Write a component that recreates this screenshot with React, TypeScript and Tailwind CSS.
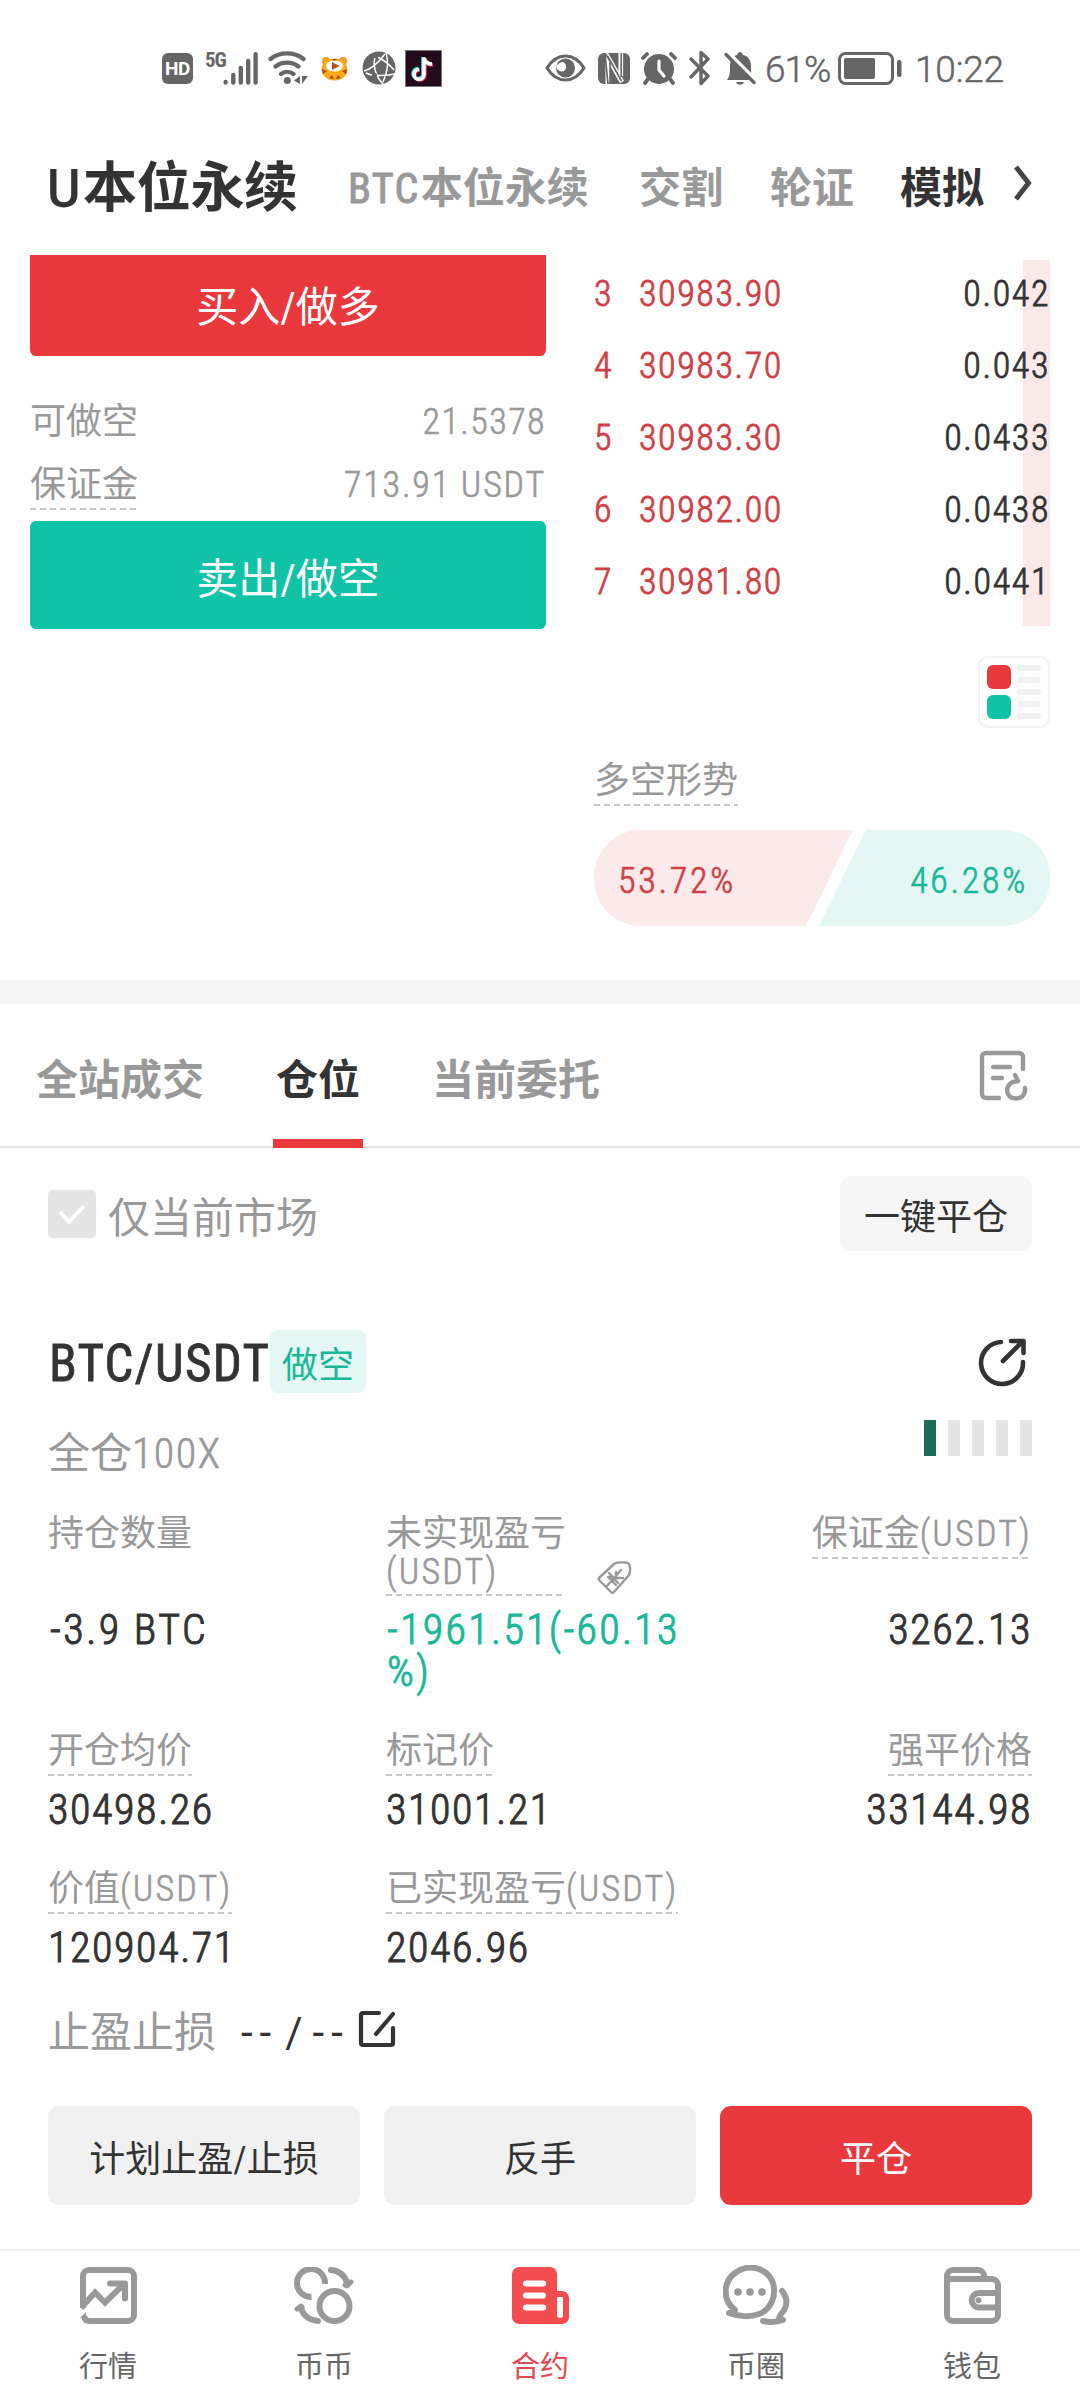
import React from "react";

const DASH =
  "h-[2px] w-full bg-[repeating-linear-gradient(90deg,#c8c8c8_0px,#c8c8c8_6px,transparent_6px,transparent_10px)]";

function DashedLabel({ children, className = "" }: { children: React.ReactNode; className?: string }) {
  return (
    <div className={`flex w-fit flex-col whitespace-nowrap ${className}`}>
      <span className="pt-[2px] leading-[38px]">{children}</span>
      <div className={`mt-[4px] ${DASH}`} />
    </div>
  );
}

function Unit() {
  return <span className="font-light tracking-[2.2px] [-webkit-text-stroke:0.6px_#999]">(USDT)</span>;
}

function StatusBar() {
  return (
    <div className="flex h-[136px] items-center pl-[162px] text-[#666] [font-stretch:100%]">
      <div className="flex h-[31px] w-[31px] items-center justify-center rounded-[6px] bg-[#666] text-[19px] font-bold leading-none tracking-[-0.5px] text-white">
        HD
      </div>
      <div className="ml-[12px] h-[33px] w-[18px] text-[21px] font-bold leading-[16px] tracking-[-1px] [font-stretch:75%]">5G</div>
      <svg className="h-[33px] w-[36px]" viewBox="0 0 36 33" stroke="#666" strokeWidth="4.4" strokeLinecap="round">
        <path d="M2.6 30v.6M10.3 23v7.6M17.8 16v14.6M25.2 9v21.6M32.6 2.3v28.3" />
      </svg>
      <svg className="ml-[9px] h-[34px] w-[41px]" viewBox="0 0 41 34" fill="none" stroke="#666" strokeWidth="4.2" strokeLinecap="round">
        <path d="M2.5 8C12 .6 26 .6 35.500 8M7.500 15.500c6.500-5.200 16.500-5.200 23 0M13 23c3.600-2.800 8.800-2.800 12.500 0" />
        <circle cx="19.300" cy="29.500" r="3.500" fill="#666" stroke="none" />
        <path d="M32 25v8l-6-3.500zM34 25h6l-6 8z" fill="#666" stroke="none" />
      </svg>
      <svg className="ml-[12px] h-[25px] w-[27px]" viewBox="0 0 27 25">
        <circle cx="5" cy="5" r="4" fill="#f29b1d" />
        <circle cx="22" cy="5" r="4" fill="#f29b1d" />
        <ellipse cx="13.500" cy="13.500" rx="13" ry="11" fill="#fbaa19" />
        <path d="M1 13l5 2-4 3zM26 13l-5 2 4 3zM8 22l3-3 2 4zM15 23l2-4 3 3zM11 3h5l-2 3z" fill="#a94a1c" />
        <ellipse cx="13.500" cy="10" rx="8.500" ry="5.500" fill="#fff" />
        <path d="M11 6l7.500 4-7.500 4z" fill="#b54f24" />
      </svg>
      <svg className="ml-[14px] h-[34px] w-[34px]" viewBox="0 0 34 34">
        <circle cx="17" cy="17" r="16.500" fill="#666" />
        <path
          d="M14 4C10 12 13 25 21 33M24 2c3 9 1 20-3 29M4 22c8 4 18 3 29 1M13 5c8 3 14 8 19 14M2 20C10 18 17 11 23 3"
          fill="none"
          stroke="#fff"
          strokeWidth="1.500"
        />
        <circle cx="14" cy="5" r="2.500" fill="#666" />
        <circle cx="12.500" cy="24.500" r="2.500" fill="#666" />
      </svg>
      <svg className="ml-[9px] h-[37px] w-[37px]" viewBox="0 0 37 37">
        <rect x=".5" y=".5" width="36" height="36" fill="#240b1c" stroke="#777" />
        <g fill="none" strokeWidth="3.600">
          <path d="M18 7v16.500a5 5 0 1 1-5-5M18 8c1 4 4 6 8 6" stroke="#25e8e4" />
          <path d="M20 8v17a5 5 0 1 1-5-5M20 9c1 4 4 6 8 6" stroke="#f5295b" />
          <path d="M19 7.500v17a5 5 0 1 1-5-5M19 8c1 4 4 6 8 6" stroke="#fff" />
        </g>
      </svg>
      <svg className="ml-[103px] h-[28px] w-[41px]" viewBox="0 0 41 28">
        <path d="M2 14C12-2 29-2 39 14C29 30 12 30 2 14z" fill="none" stroke="#666" strokeWidth="3.200" strokeLinejoin="round" />
        <circle cx="20.500" cy="14" r="9.500" fill="#666" />
        <path d="M11 13a6 6 0 0 0 8 4c3-2 3-7-1-9a9.500 9.500 0 0 0-7 5z" fill="#fff" />
      </svg>
      <svg className="ml-[12px] h-[31px] w-[32px]" viewBox="0 0 32 31">
        <rect width="32" height="31" rx="6" fill="#666" />
        <path d="M9.800 31V4L24 29M22.800 0v23" fill="none" stroke="#fff" strokeWidth="4.600" />
        <path d="M7 0l5 8v23h-2zM9.500 3L23.500 28M23.200 0v24" fill="none" stroke="#666" strokeWidth="1.600" />
      </svg>
      <svg className="ml-[11px] h-[33px] w-[36px]" viewBox="0 0 36 33">
        <circle cx="18" cy="17" r="15" fill="#666" />
        <path d="M2 6l4-4M34 6l-4-4" stroke="#fefefe" strokeWidth="7" />
        <path d="M2 6l4-4M34 6l-4-4M7 27l-3 4M29 27l3 4" stroke="#666" strokeWidth="3.800" strokeLinecap="round" />
        <circle cx="18" cy="17.500" r="13.500" fill="#666" />
        <path d="M18 9v9l5 6" fill="none" stroke="#fff" strokeWidth="3.200" strokeLinecap="round" />
      </svg>
      <svg className="ml-[12px] h-[36px] w-[22px]" viewBox="0 0 22 36" fill="none" stroke="#666" strokeWidth="3.400" strokeLinejoin="round" strokeLinecap="round">
        <path d="M2 9l17 17-7 7.500V2.500l7 6.500L2 27" />
      </svg>
      <svg className="ml-[13px] h-[35px] w-[32px]" viewBox="0 0 32 35">
        <path d="M3 29c3-4 3-8 3-14C6 9 9 5 13 4c1-4 5-4 6 0c5 1 8 5 8 11c0 6 0 10 2 14z" fill="#666" />
        <path d="M12 31h8c-1 3.500-7 3.500-8 0z" fill="#666" />
        <path d="M3 .5L32 29.500" stroke="#fff" strokeWidth="4" />
        <path d="M2 3.500L30 31.500" stroke="#666" strokeWidth="3.400" strokeLinecap="round" />
      </svg>
      <span className="ml-[9px] w-[69px] pt-[3px] text-[37px] font-light leading-[60px] tracking-[-1px] [-webkit-text-stroke:0.5px_#666]">61%</span>
      <svg className="ml-[4px] h-[33px] w-[64px]" viewBox="0 0 64 33">
        <rect x="1.500" y="1.500" width="53" height="30" rx="6" fill="none" stroke="#666" strokeWidth="3" />
        <rect x="6" y="6" width="31" height="21" rx="2" fill="#666" />
        <rect x="59" y="8" width="4.500" height="17" rx="2" fill="#666" />
      </svg>
      <span className="ml-[13px] pt-[3px] text-[37px] font-light leading-[60px] tracking-[-0.2px] [-webkit-text-stroke:0.5px_#666]">10:22</span>
    </div>
  );
}

function Header() {
  return (
    <div className="flex h-[119px] items-start whitespace-nowrap pl-[47px] text-[42px] font-bold leading-[105px] text-[#999]">
      <span className="w-[301px] text-[54px] tracking-[-0.3px] text-[#333]">
        <span className="inline-block w-[36px] origin-left scale-x-95 font-medium [font-stretch:100%]">U</span>本位永续
      </span>
      <span className="w-[291px]">
        <span className="mr-[1px] font-normal tracking-[1.4px] [-webkit-text-stroke:1px_#999]">BTC</span>本位永续
      </span>
      <span className="w-[131px]">交割</span>
      <span className="w-[130px]">轮证</span>
      <span className="text-[#333]">模拟</span>
      <svg className="ml-[29px] mt-[28px] h-[38px] w-[20px]" viewBox="0 0 20 38" fill="none" stroke="#444" strokeWidth="5">
        <path d="M3 3l12.500 16L3 35" />
      </svg>
    </div>
  );
}

const asks = [
  ["3", "30983.90", "0.042"],
  ["4", "30983.70", "0.043"],
  ["5", "30983.30", "0.0433"],
  ["6", "30982.00", "0.0438"],
  ["7", "30981.80", "0.0441"],
];

function Trade() {
  return (
    <div className="flex h-[725px] justify-between pl-[30px] pr-[30px] text-[36px]">
      <div className="w-[516px] text-[#999]">
        <div className="flex h-[101px] items-center justify-center rounded-b-[6px] bg-[#e9393d] pt-[3px] text-[42px] text-white">买入/做多</div>
        <div className="mt-[33px] flex h-[63px] items-center justify-between pt-[3px]">
          <span>可做空</span>
          <span className="font-light tracking-[1.4px] [-webkit-text-stroke:0.6px_#999]">21.5378</span>
        </div>
        <div className="flex h-[63px] justify-between leading-[67px]">
          <DashedLabel className="pt-[12px]">保证金</DashedLabel>
          <span className="font-light tracking-[1.8px] [-webkit-text-stroke:0.6px_#999]">713.91 USDT</span>
        </div>
        <div className="mt-[6px] flex h-[108px] items-center justify-center rounded-[6px] bg-[#10c2a6] pt-[9px] text-[42px] text-white">卖出/做空</div>
      </div>
      <div className="w-[456px] pt-[2px]">
        <div className="relative font-light tracking-[1.6px]">
          <div className="absolute right-0 top-[3px] h-[366px] w-[27px] bg-[#fbe9ea]" />
          {asks.map(([n, price, amount]) => (
            <div key={n} className="relative flex h-[72px] items-center pt-[1px] text-[#cf4046]">
              <span className="w-[45px] [-webkit-text-stroke:0.8px_#cf4046]">{n}</span>
              <span className="flex-1 [-webkit-text-stroke:0.8px_#cf4046]">{price}</span>
              <span className="text-[#333] [-webkit-text-stroke:0.8px_#333]">{amount}</span>
            </div>
          ))}
        </div>
        <div className="ml-auto mt-[39px] flex h-[72px] w-[72px] justify-between rounded-[10px] border-2 border-[#f2f2f2] px-[7px] py-[7px]">
          <div className="flex flex-col gap-[6px]">
            <div className="h-[24px] w-[24px] rounded-[6px] bg-[#e9393d]" />
            <div className="h-[24px] w-[24px] rounded-[6px] bg-[#10c2a6]" />
          </div>
          <div className="flex flex-col gap-[6px]">
            {[0, 1, 2, 3, 4].map((i) => (
              <div key={i} className="h-[6px] w-[24px] rounded-[3px] bg-[#f2f2f2]" />
            ))}
          </div>
        </div>
        <DashedLabel className="mt-[32px] text-[#999]">多空形势</DashedLabel>
        <div className="mt-[24px] flex h-[96px] items-center overflow-hidden rounded-[47px] bg-[linear-gradient(116.1deg,#fce9ea_0_51.4%,#fff_51.5%_54%,#e4f7f4_54.1%)] pt-[5px] font-light tracking-[2.7px]">
          <span className="pl-[24px] text-[#cf4046] [-webkit-text-stroke:0.7px_#cf4046]">53.72%</span>
          <span className="ml-auto pr-[22px] text-[#19b896] [-webkit-text-stroke:0.7px_#19b896]">46.28%</span>
        </div>
      </div>
    </div>
  );
}

function Tabs() {
  return (
    <div className="flex h-[144px] border-b-2 border-[#e6e6e6] pl-[36px] pr-[51px] text-[42px] font-bold leading-[56px] text-[#999]">
      <span className="pt-[49px]">全站成交</span>
      <div className="relative ml-[69px] mr-[69px] w-[90px] pt-[49px] text-center text-[#333]">
        仓位
        <div className="absolute bottom-[-2px] left-0 h-[9px] w-full bg-[#e9393d]" />
      </div>
      <span className="pt-[49px]">当前委托</span>
      <svg className="ml-auto mt-[46px] h-[52px] w-[50px]" viewBox="-1 -1 50 52" fill="none" stroke="#999" strokeWidth="4.400" strokeLinecap="round" strokeLinejoin="round">
        <path d="M43 18V6a4 4 0 0 0-4-4H6a4 4 0 0 0-4 4v37a4 4 0 0 0 4 4h13M13 16h17M13 27h9" />
        <path d="M35 24l3 6-5 1c-5 2-7 7-5 12c3 6 13 6 16 0c1-2 1.500-4 1-6" />
      </svg>
    </div>
  );
}

function Position() {
  return (
    <div className="flex h-[1101px] flex-col px-[48px] text-[36px] text-[#333]">
      <div className="mt-[28px] flex h-[75px] items-center">
        <div className="flex h-[48px] w-[48px] items-center justify-center rounded-[5px] bg-[#e5e5e5]">
          <svg className="h-[24px] w-[30px]" viewBox="0 0 30 24" fill="none" stroke="#fff" strokeWidth="4">
            <path d="M3 10l9 10L27 4" />
          </svg>
        </div>
        <span className="ml-[12px] pt-[10px] text-[42px] leading-[60px] text-[#999]">仅当前市场</span>
        <div className="ml-auto flex h-[75px] w-[192px] items-center justify-center rounded-[12px] bg-[#f6f6f6] pt-[8px]">一键平仓</div>
      </div>

      <div className="mt-[79px] flex h-[63px] items-center">
        <span className="w-[222px] whitespace-nowrap pl-[1px] pt-[5px] text-[51px] font-normal leading-[60px] tracking-[1.3px] [-webkit-text-stroke:0.8px_#333]">
          BTC/USDT
        </span>
        <div className="flex h-[63px] w-[96px] items-center justify-center rounded-[8px] bg-[#e4f7f4] pt-[8px] text-[#19b896]">做空</div>
        <svg className="ml-auto mr-[5px] h-[50px] w-[50px]" viewBox="-1 -1 50 50" fill="none" stroke="#333" strokeWidth="4.600" strokeLinecap="round" strokeLinejoin="round">
          <path d="M23 4a21 21 0 1 0 22 20M25 23L44 4M33 3h12.500v12" />
        </svg>
      </div>

      <div className="flex h-[112px] justify-between">
        <span className="pt-[33px] text-[42px] leading-[56px] text-[#999]">
          全仓<span className="font-light tracking-[1.4px] [-webkit-text-stroke:0.6px_#999]">100X</span>
        </span>
        <div className="mt-[27px] flex h-[36px] gap-[12px]">
          <div className="w-[12px] bg-[#1c6b57]" />
          <div className="w-[12px] bg-[#e5e5e5]" />
          <div className="w-[12px] bg-[#e5e5e5]" />
          <div className="w-[12px] bg-[#e5e5e5]" />
          <div className="w-[12px] bg-[#e5e5e5]" />
        </div>
      </div>

      <div className="mt-[8px] grid grid-cols-[338px_326px_320px]">
        <div className="h-[217px]">
          <div className="h-[96px] pt-[2px] leading-[38px] text-[#999]">持仓数量</div>
          <div className="pl-[2px] text-[42px] font-light leading-[42px] tracking-[2.5px] [-webkit-text-stroke:1px_#333]">-3.9 BTC</div>
        </div>
        <div className="h-[217px]">
          <div className="flex h-[96px] text-[#999]">
            <div className="w-[176px] whitespace-nowrap pt-[2px] leading-[38px]">
              <div>未实现盈亏</div>
              <div>
                <Unit />
              </div>
              <div className={`mt-[3px] ${DASH}`} />
            </div>
            <svg className="ml-[35px] mt-[48px] h-[34px] w-[36px]" viewBox="0 0 36 34" fill="none" stroke="#999" strokeWidth="2.400" strokeLinejoin="round" strokeLinecap="round">
              <path d="M2 17L17 3c2-2 12-2 14-1s3 8 1 12L17 31c-1 1-2 1-3 0L3 20c-1-1-2-2-1-3z" />
              <path d="M12 12l9 10M24 9l-7 8-7 8M19 11v6h7M11 16l8 8M17 17l-5-1" />
            </svg>
          </div>
          <div className="whitespace-nowrap pl-[1px] text-[42px] font-light leading-[42px] tracking-[2.3px] text-[#19b896] [-webkit-text-stroke:1px_#19b896]">
            -1961.51(-60.13
            <br />
            %)
          </div>
        </div>
        <div className="flex h-[217px] flex-col items-end">
          <div className="h-[96px] text-[#999]">
            <DashedLabel>
              保证金
              <Unit />
            </DashedLabel>
          </div>
          <div className="text-[42px] font-light leading-[42px] tracking-[1.6px] [-webkit-text-stroke:1px_#333]">3262.13</div>
        </div>

        <Cell label="开仓均价" value="30498.26" />
        <Cell label="标记价" value="31001.21" />
        <Cell label="强平价格" value="33144.98" end />
        <Cell label="价值" unit value="120904.71" />
        <Cell label="已实现盈亏" unit value="2046.96" />
      </div>

      <div className="mt-[-3px] flex h-[60px] items-center text-[42px] leading-[60px]">
        <span className="w-[193px] text-[#999]">止盈止损</span>
        <span className="w-[117px] whitespace-nowrap [font-stretch:100%]">
          <span className="tracking-[7px]">--</span>
          <span className="ml-[7px] mr-[10px]">/</span>
          <span className="tracking-[7px]">--</span>
        </span>
        <svg className="mt-[-8px] h-[38px] w-[38px]" viewBox="-1 -1 38 38" fill="none" stroke="#333" strokeWidth="4.200" strokeLinejoin="round" strokeLinecap="round">
          <path d="M20 2H4a2 2 0 0 0-2 2v28a2 2 0 0 0 2 2h28a2 2 0 0 0 2-2V17M17 23L34 3" />
        </svg>
      </div>

      <div className="mb-[44px] mt-auto grid h-[99px] grid-cols-3 gap-[24px]">
        <div className="flex h-[99px] items-center justify-center rounded-[11px] bg-[#f1f1f1] pt-[8px]">计划止盈/止损</div>
        <div className="flex h-[99px] items-center justify-center rounded-[11px] bg-[#f1f1f1] pt-[8px]">反手</div>
        <div className="flex h-[99px] items-center justify-center rounded-[11px] bg-[#e9393d] pt-[8px] text-white">平仓</div>
      </div>
    </div>
  );
}

function Cell({ label, value, unit, end }: { label: string; value: string; unit?: boolean; end?: boolean }) {
  return (
    <div className={end ? "flex h-[138px] flex-col items-end" : "flex h-[138px] flex-col"}>
      <DashedLabel className="text-[#999]">
        {label}
        {unit && <Unit />}
      </DashedLabel>
      <div className="mt-[13px] text-[42px] font-light leading-[42px] tracking-[1.6px] [-webkit-text-stroke:1px_#333]">{value}</div>
    </div>
  );
}

function MarketIcon() {
  return (
    <svg className="h-[57px] w-[57px]" viewBox="0 0 57 57" fill="none" stroke="#999" strokeWidth="6">
      <path d="M3 41V9a6 6 0 0 1 6-6h39a6 6 0 0 1 6 6v39a6 6 0 0 1-6 6H9c-3 0-4.500-2-5-5" />
      <path d="M1 41L15 25.500 25 35.500 45 16" />
      <path d="M30 16.500h15v15" strokeLinecap="round" strokeLinejoin="round" />
      <path d="M0 51l6-6v6z" fill="#999" stroke="none" />
    </svg>
  );
}

function CoinIcon() {
  return (
    <svg className="h-[57px] w-[60px]" viewBox="0 0 60 57" fill="none" stroke="#999" strokeWidth="6">
      <circle cx="40.500" cy="39" r="15" />
      <path d="M31 17A14 14 0 1 0 17.500 30" />
      <path d="M37 3c9 1 14 6 16 13M24 54C15 53 9 48 7 41" strokeLinecap="round" />
      <path d="M51 18l2 1 4-4M3 42l4-3 1 1" strokeLinecap="round" strokeLinejoin="round" strokeWidth="5" />
    </svg>
  );
}

function ContractIcon() {
  return (
    <svg className="h-[57px] w-[57px]" viewBox="0 0 57 57">
      <path d="M7 0h31a7 7 0 0 1 7 7v17h5a7 7 0 0 1 7 7v19a7 7 0 0 1-7 7H7a7 7 0 0 1-7-7V7a7 7 0 0 1 7-7z" fill="#f24e50" />
      <path d="M14 16.500h17M14 28.500h17M14 40.500h17" stroke="#fff" strokeWidth="6" strokeLinecap="round" />
      <path d="M45 30h6v18a3 3 0 0 1-6 0z" fill="#fff" />
    </svg>
  );
}

function ChatIcon() {
  return (
    <svg className="h-[61px] w-[67px]" viewBox="0 0 67 61" fill="none" stroke="#999" strokeWidth="6" strokeLinecap="round" strokeLinejoin="round">
      <path d="M6 48c2 0 5-1 6-3C-1 35 0 17 12 8C27-3 45 4 50 18c4 14-3 27-14 31c-8 3-20 3-30-1z" />
      <path d="M59 26c6 7 6 16-1 23-1 2-2 3-2 5l4 1c-6 2-13 2.500-20 1" />
      <g fill="#999" stroke="none">
        <circle cx="15" cy="27" r="3.800" />
        <circle cx="27" cy="27" r="3.800" />
        <circle cx="39" cy="27" r="3.800" />
      </g>
    </svg>
  );
}

function WalletIcon() {
  return (
    <svg className="h-[57px] w-[57px]" viewBox="0 0 57 57" fill="none" stroke="#999" strokeWidth="6">
      <path d="M3 12h45a6 6 0 0 1 6 6v30a6 6 0 0 1-6 6H9a6 6 0 0 1-6-6V9a6 6 0 0 1 6-6h25a6 6 0 0 1 6 6v3" />
      <path d="M54 26H35a7.300 7.300 0 0 0 0 14.600H54" />
      <circle cx="34.500" cy="33.300" r="3" fill="#999" stroke="none" />
    </svg>
  );
}

const nav = [
  { label: "行情", icon: <MarketIcon /> },
  { label: "币币", icon: <CoinIcon /> },
  { label: "合约", icon: <ContractIcon />, active: true },
  { label: "币圈", icon: <ChatIcon /> },
  { label: "钱包", icon: <WalletIcon /> },
];

export default function App() {
  return (
    <div className="h-[2400px] w-[1080px] overflow-hidden bg-[#fefefe] font-['Roboto','Noto_Sans_CJK_SC',sans-serif] [font-stretch:87.5%]">
      <StatusBar />
      <Header />
      <Trade />
      <div className="h-[24px] bg-[#f6f6f6]" />
      <Tabs />
      <Position />
      <nav className="grid h-[151px] grid-cols-5 border-t-2 border-[#efefef]">
        {nav.map((item) => (
          <div key={item.label} className="flex flex-col items-center">
            <div className="mt-[14px] flex h-[61px] items-center">{item.icon}</div>
            <span className={item.active ? "mt-[21px] text-[29px] leading-[40px] text-[#e04a50]" : "mt-[21px] text-[29px] leading-[40px] text-[#666]"}>
              {item.label}
            </span>
          </div>
        ))}
      </nav>
    </div>
  );
}
